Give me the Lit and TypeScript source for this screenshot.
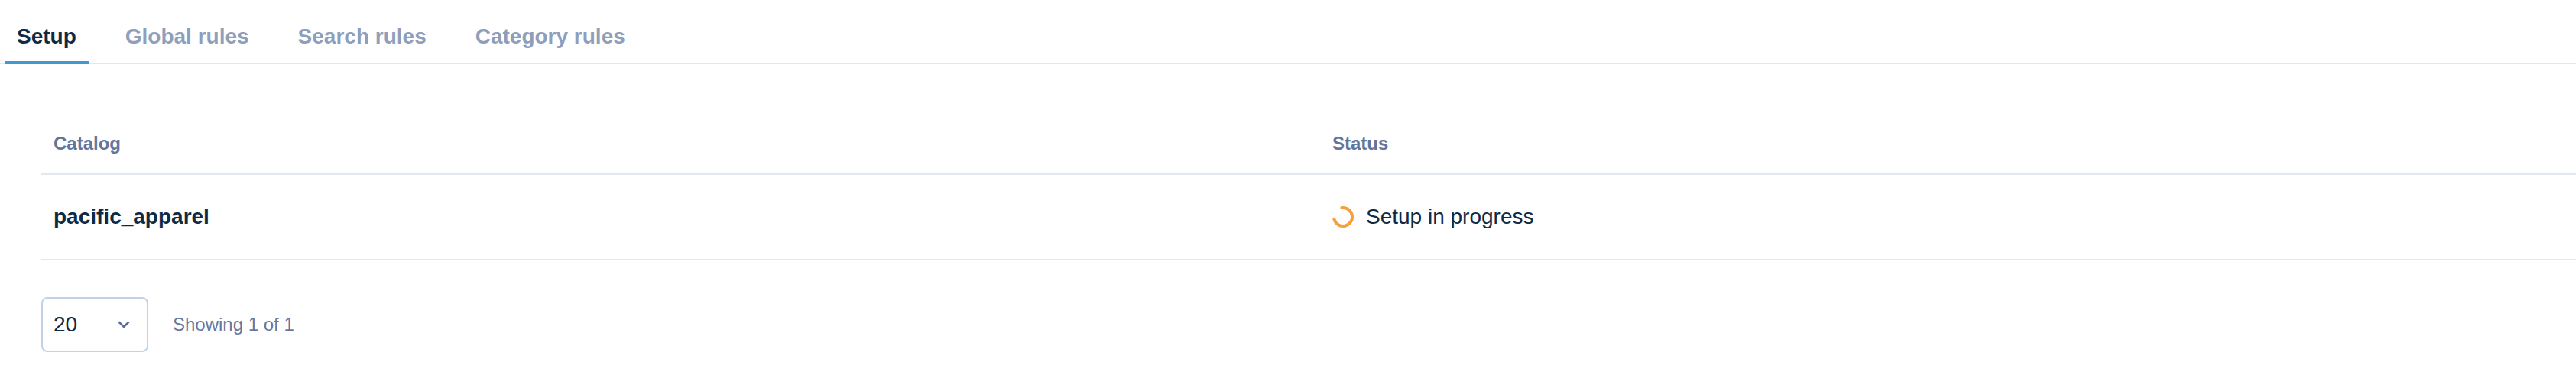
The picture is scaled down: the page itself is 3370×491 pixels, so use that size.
import { LitElement, html, css } from "lit";
import { customElement } from "lit/decorators.js";

@customElement("app-root")
export class AppRoot extends LitElement {
  static styles = css`
    :host {
      display: block;
      width: 3370px;
      height: 491px;
      background: #ffffff;
      font-family: "Liberation Sans", Arial, sans-serif;
      color: #0f2a43;
      overflow: hidden;
    }
    .tabs {
      display: flex;
      height: 84px;
      box-sizing: border-box;
      padding-left: 6px;
      border-bottom: 2px solid #e2e8f3;
    }
    .tab {
      box-sizing: border-box;
      height: 84px;
      padding: 26px 16px 0;
      margin-right: 32px;
      font-size: 28px;
      line-height: 44px;
      font-weight: 700;
      color: #8f9fbb;
      white-space: nowrap;
    }
    .tab.active {
      color: #0f2a43;
      border-bottom: 4px solid #4299d0;
    }
    .content {
      padding: 64px 0 0 54px;
    }
    .row {
      display: grid;
      grid-template-columns: 1673px 1fr;
      box-sizing: border-box;
      border-bottom: 2px solid #e2e8f3;
      align-items: center;
    }
    .head {
      height: 81px;
      font-size: 24px;
      font-weight: 700;
      color: #62759d;
    }
    .body {
      height: 112px;
      font-size: 28px;
    }
    .cell {
      padding: 0 16px;
    }
    .name {
      font-weight: 700;
    }
    .status {
      display: flex;
      align-items: center;
      gap: 16px;
    }
    .spinner {
      display: block;
      width: 28px;
      height: 28px;
      flex: none;
    }
    .footer {
      display: flex;
      align-items: center;
      gap: 32px;
      margin-top: 48px;
    }
    .select {
      box-sizing: border-box;
      width: 140px;
      height: 72px;
      border: 2px solid #c3d1e5;
      border-radius: 8px;
      padding: 0 22px 0 14px;
      display: flex;
      align-items: center;
      justify-content: space-between;
      font-size: 28px;
      background: #fff;
    }
    .chev {
      display: block;
      width: 16px;
      height: 10px;
    }
    .showing {
      font-size: 24px;
      color: #66789f;
    }
  `;

  render() {
    return html`
      <div class="tabs">
        <div class="tab active">Setup</div>
        <div class="tab">Global rules</div>
        <div class="tab">Search rules</div>
        <div class="tab">Category rules</div>
      </div>
      <div class="content">
        <div class="row head">
          <div class="cell">Catalog</div>
          <div class="cell">Status</div>
        </div>
        <div class="row body">
          <div class="cell name">pacific_apparel</div>
          <div class="cell status">
            <svg class="spinner" viewBox="0 0 28 28" fill="none">
              <path d="M12.4 2.1 A12 12 0 1 1 2.4 17" stroke="#f6a03c" stroke-width="4" stroke-linecap="round"></path>
            </svg>
            <span>Setup in progress</span>
          </div>
        </div>
        <div class="footer">
          <div class="select">
            <span>20</span>
            <svg class="chev" viewBox="0 0 16 10" fill="none">
              <path d="M1.5 1.5 L8 8 L14.5 1.5" stroke="#5b6f98" stroke-width="2.6"></path>
            </svg>
          </div>
          <div class="showing">Showing 1 of 1</div>
        </div>
      </div>
    `;
  }
}
